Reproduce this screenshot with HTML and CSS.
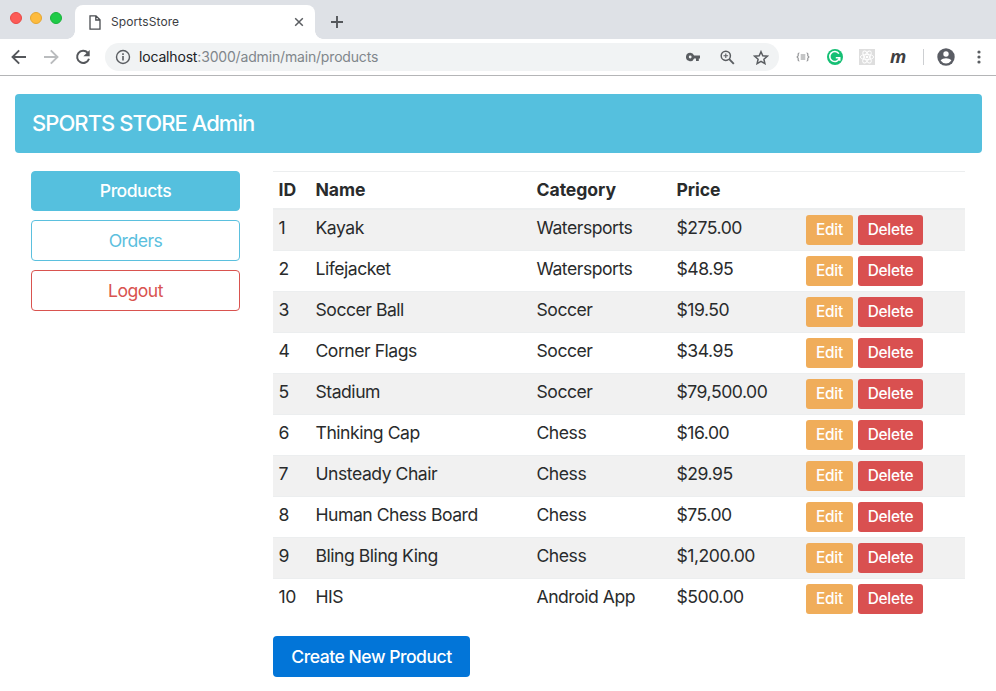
FILE: index.html
```html
<!DOCTYPE html>
<html lang="en">
<head>
<meta charset="utf-8">
<title>SportsStore</title>
<link rel="stylesheet" href="styles.css">
</head>
<body>
<div class="tabstrip">
  <div class="lights"><i class="light red"></i><i class="light yellow"></i><i class="light green"></i></div>
  <div class="tab">
    <svg class="tab-doc" width="12" height="15" viewBox="0 0 12 15" fill="none" stroke="#4a4d51" stroke-width="1.3"><path d="M1 .8h6l4 4v9.4H1zM6.8 1v4H11"/></svg>
    <span class="tab-title">SportsStore</span>
    <svg width="10" height="10" viewBox="0 0 10 10" stroke="#5a5d61" stroke-width="1.5"><path d="M1.2 1.2l7.6 7.6M8.800 1.200L1.200 8.800"/></svg>
  </div>
  <svg class="plus" width="12" height="12" viewBox="0 0 12 12" stroke="#54575b" stroke-width="1.9"><path d="M6 0v12M0 6h12"/></svg>
</div>
<div class="toolbar">
  <svg class="nav-icon" width="16" height="16" viewBox="0 0 16 16" fill="none" stroke="#54575b" stroke-width="1.9"><path d="M15 8H2M8.200 1.300L1.500 8l6.700 6.700"/></svg>
  <svg class="nav-icon" width="16" height="16" viewBox="0 0 16 16" fill="none" stroke="#babcbe" stroke-width="1.9"><path d="M1 8h13M7.800 1.300L14.500 8l-6.700 6.700"/></svg>
  <svg class="nav-icon" width="16" height="16" viewBox="0 0 16 16"><path d="M12.700 3.700A6.100 6.100 0 1 0 14 9.800" fill="none" stroke="#54575b" stroke-width="2"/><path d="M14.700 1v6.300H8.400z" fill="#54575b"/></svg>
  <div class="address">
    <svg class="info" width="16" height="16" viewBox="0 0 16 16" fill="none" stroke="#5a5d61"><circle cx="8" cy="8" r="6.500" stroke-width="1.400"/><path d="M8 7v4.500M8 4.300v1.600" stroke-width="1.600"/></svg>
    <span class="url"><b>localhost</b>:3000/admin/main/products</span>
    <svg class="key" width="14" height="10" viewBox="0 0 14 10"><path fill="#5a5d61" fill-rule="evenodd" d="M4.200.8a4.200 4.200 0 1 0 3.900 5.700H10V9h2.800V6.500H14v-3H8.100A4.200 4.200 0 0 0 4.200.8zm0 2.800a1.400 1.400 0 1 1 0 2.800 1.400 1.400 0 0 1 0-2.800z"/></svg>
    <svg class="lens" width="15" height="15" viewBox="0 0 15 15" fill="none" stroke="#5a5d61"><circle cx="5.800" cy="5.800" r="4.600" stroke-width="1.500"/><path d="M9.200 9.200l4.600 4.600" stroke-width="1.900"/><path d="M3.500 5.800h4.600M5.800 3.500v4.600" stroke-width="1.100"/></svg>
    <svg class="star" width="16" height="15" viewBox="0 0 16 15" fill="none" stroke="#5a5d61" stroke-width="1.500"><path d="M8 1.700l1.800 4.100 4.500.4-3.400 3 1 4.400L8 11.300l-3.900 2.300 1-4.400-3.400-3 4.500-.4z"/></svg>
  </div>
  <svg class="braces" width="14" height="10" viewBox="0 0 14 10" fill="none" stroke="#6d6f72"><path d="M3.300 1C1.900 1 2.200 2 2.200 3S1.800 5 .8 5c1 0 1.400 1 1.400 2s-.3 2 1.100 2M10.700 1c1.400 0 1.100 1 1.100 2s.4 2 1.400 2c-1 0-1.400 1-1.400 2s.3 2-1.100 2" stroke-width="1"/><path d="M4.700 3h4.600M4.700 5h4.600M4.700 7h4.600" stroke-width=".8"/></svg>
  <svg class="grammar" width="16" height="16" viewBox="0 0 16 16"><circle cx="8" cy="8" r="8" fill="#15bf74"/><path d="M11.900 4.600A5 5 0 1 0 12.600 9M8.800 8.800h3.900v3" fill="none" stroke="#fff" stroke-width="1.600"/></svg>
  <svg class="react" width="16" height="16" viewBox="0 0 16 16"><path fill="#dedede" d="M0 0h16v16H0z"/><g fill="none" stroke="#fff" stroke-width=".9"><ellipse cx="8" cy="8" rx="6.700" ry="2.600"/><ellipse cx="8" cy="8" rx="6.700" ry="2.600" transform="rotate(60 8 8)"/><ellipse cx="8" cy="8" rx="6.700" ry="2.600" transform="rotate(120 8 8)"/></g><circle cx="8" cy="8" r="1.300" fill="#fff"/></svg>
  <span class="ext-m">m</span>
  <i class="divider"></i>
  <svg class="avatar" width="18" height="18" viewBox="0 0 18 18"><circle cx="9" cy="9" r="8.700" fill="#5a5d64"/><circle cx="9" cy="6" r="2.700" fill="#fff"/><path d="M3.600 12.500C4.500 10.900 7.200 10.200 9 10.200s4.500.7 5.400 2.300A6.500 6.500 0 0 1 9 15.400a6.500 6.500 0 0 1-5.400-2.900z" fill="#fff"/></svg>
  <svg class="dots" width="4" height="14" viewBox="0 0 4 14" fill="#5a5d61"><circle cx="2" cy="2" r="1.600"/><circle cx="2" cy="7" r="1.600"/><circle cx="2" cy="12" r="1.600"/></svg>
</div>
<main class="page">
  <header class="banner"><span class="brand">SPORTS STORE Admin</span></header>
  <div class="columns">
    <nav class="side">
      <a class="btn nav-btn active"><span>Products</span></a>
      <a class="btn nav-btn orders"><span>Orders</span></a>
      <a class="btn nav-btn logout"><span>Logout</span></a>
    </nav>
    <section class="content">
      <table class="products">
        <colgroup><col class="c-id"><col class="c-name"><col class="c-cat"><col class="c-price"><col></colgroup>
        <thead><tr><th>ID</th><th>Name</th><th>Category</th><th>Price</th><th></th></tr></thead>
        <tbody>
          <tr><td>1</td><td>Kayak</td><td>Watersports</td><td>$275.00</td><td><div class="actions"><a class="btn edit">Edit</a><a class="btn delete">Delete</a></div></td></tr>
          <tr><td>2</td><td>Lifejacket</td><td>Watersports</td><td>$48.95</td><td><div class="actions"><a class="btn edit">Edit</a><a class="btn delete">Delete</a></div></td></tr>
          <tr><td>3</td><td>Soccer Ball</td><td>Soccer</td><td>$19.50</td><td><div class="actions"><a class="btn edit">Edit</a><a class="btn delete">Delete</a></div></td></tr>
          <tr><td>4</td><td>Corner Flags</td><td>Soccer</td><td>$34.95</td><td><div class="actions"><a class="btn edit">Edit</a><a class="btn delete">Delete</a></div></td></tr>
          <tr><td>5</td><td>Stadium</td><td>Soccer</td><td>$79,500.00</td><td><div class="actions"><a class="btn edit">Edit</a><a class="btn delete">Delete</a></div></td></tr>
          <tr><td>6</td><td>Thinking Cap</td><td>Chess</td><td>$16.00</td><td><div class="actions"><a class="btn edit">Edit</a><a class="btn delete">Delete</a></div></td></tr>
          <tr><td>7</td><td>Unsteady Chair</td><td>Chess</td><td>$29.95</td><td><div class="actions"><a class="btn edit">Edit</a><a class="btn delete">Delete</a></div></td></tr>
          <tr><td>8</td><td>Human Chess Board</td><td>Chess</td><td>$75.00</td><td><div class="actions"><a class="btn edit">Edit</a><a class="btn delete">Delete</a></div></td></tr>
          <tr><td>9</td><td>Bling Bling King</td><td>Chess</td><td>$1,200.00</td><td><div class="actions"><a class="btn edit">Edit</a><a class="btn delete">Delete</a></div></td></tr>
          <tr><td>10</td><td>HIS</td><td>Android App</td><td>$500.00</td><td><div class="actions"><a class="btn edit">Edit</a><a class="btn delete">Delete</a></div></td></tr>
        </tbody>
      </table>
      <a class="btn create">Create New Product</a>
    </section>
  </div>
</main>
</body>
</html>
```
FILE: styles.css
```css
* { box-sizing: border-box; }
body {
  margin: 0;
  height: 691px;
  overflow: hidden;
  background: #fff;
  color: #292b2c;
  font-family: Inter, "Liberation Sans", sans-serif;
  font-size: 17.6px;
  line-height: 26px;
}
svg { display: block; flex: none; }

/* Browser chrome */
.tabstrip { display: flex; height: 39px; padding-top: 5px; background: #dee1e6; }
.lights { display: flex; gap: 8px; width: 75px; padding: 7px 0 0 10px; }
.light { width: 12px; height: 12px; border-radius: 50%; }
.red { background: #fc5b57; border: 1px solid #e94845; }
.yellow { background: #fdbb3e; border: 1px solid #e5a630; }
.green { background: #1fcb48; border: 1px solid #18b33b; }
.tab {
  position: relative;
  display: flex;
  align-items: center;
  width: 240px;
  height: 34px;
  padding: 0 11px 0 14px;
  border-radius: 8px 8px 0 0;
  background: #fff;
}
.tab::before, .tab::after {
  content: "";
  position: absolute;
  bottom: 0;
  width: 8px;
  height: 8px;
}
.tab::before { left: -8px; background: radial-gradient(circle at 0 0, transparent 7.5px, #fff 8px); }
.tab::after { right: -8px; background: radial-gradient(circle at 100% 0, transparent 7.5px, #fff 8px); }
.tab-title { flex: 1; margin-left: 10px; font-size: 12px; letter-spacing: .1px; color: #3c4043; white-space: nowrap; }
.plus { margin: 11px 0 0 16px; }
.toolbar {
  display: flex;
  align-items: center;
  height: 37px;
  padding-left: 11px;
  border-bottom: 1px solid #b4b5b7;
  background: #fff;
}
.nav-icon { margin-right: 16px; }
.address {
  display: flex;
  align-items: center;
  width: 674px;
  height: 28px;
  margin-left: -2px;
  padding-left: 10px;
  border-radius: 14px;
  background: #f1f3f4;
}
.url { flex: 1; margin-left: 8px; font-size: 14px; letter-spacing: -.17px; color: #80868b; white-space: nowrap; }
.url b { font-weight: 400; color: #202124; }
.key { margin-top: -1px; }
.lens { margin-left: 20px; }
.star { margin: 0 10px 0 18px; }
.braces { margin-left: 17px; }
.grammar { margin-left: 17px; }
.react { margin-left: 16px; }
.ext-m { width: 16px; margin: -3px 0 0 15px; font: italic 700 18px/20px "Open Sans", sans-serif; color: #3f4042; }
.divider { width: 1px; height: 16px; margin-left: 17px; background: #cdcfd2; }
.avatar { margin-left: 13px; }
.dots { margin-left: 22px; }

/* Page */
.page { padding: 18px 14px 0 15px; }
.banner { height: 59px; padding: 16px 17px; border-radius: 4px; background: #55c0de; color: #fff; font-size: 22px; letter-spacing: -.95px; font-weight: 500; white-space: nowrap; }
.columns { display: flex; gap: 33px; padding: 18px 17px 0 16px; }
.side { display: flex; flex-direction: column; gap: 9px; width: 209px; }
.btn { display: flex; align-items: center; justify-content: center; border-radius: 4px; color: #fff; font-weight: 500; letter-spacing: -.5px; white-space: nowrap; }
.nav-btn { height: 41px; border: 1px solid; }
.active { height: 40px; border-color: #55c0de; background: #55c0de; }
.orders { border-color: #5bc0de; color: #5bc0de; }
.logout { border-color: #d9534f; color: #d9534f; }
.orders, .logout { font-weight: 400; }
.content { width: 692px; }
.products { width: 100%; table-layout: fixed; border-collapse: separate; border-spacing: 0; margin-bottom: 17px; }
.c-id { width: 37px; }
.c-name { width: 221px; }
.c-cat { width: 140px; }
.c-price { width: 129px; }
.products th, .products td { padding: 5px 5px 5px 5.5px; border-top: 1px solid #eceeef; text-align: left; vertical-align: top; white-space: nowrap; letter-spacing: -.48px; }
.products th { height: 38px; border-bottom: 1px solid #eceeef; font-weight: 650; letter-spacing: -.05px; }
.products td { height: 41px; }
.products td:last-child { padding-left: 6px; }
.products td:first-child, .products th:first-child { padding-right: 0; }
.products tbody tr:nth-child(odd) { background: #f1f1f1; }
.actions { display: flex; gap: 5px; }
.edit, .delete { height: 30px; border-radius: 3px; font-size: 15.4px; letter-spacing: -.25px; }
.edit { width: 47px; background: #f0ad5a; }
.delete { width: 65px; background: #d95050; }
.create { width: 197px; height: 41px; background: #0275d8; }
```
